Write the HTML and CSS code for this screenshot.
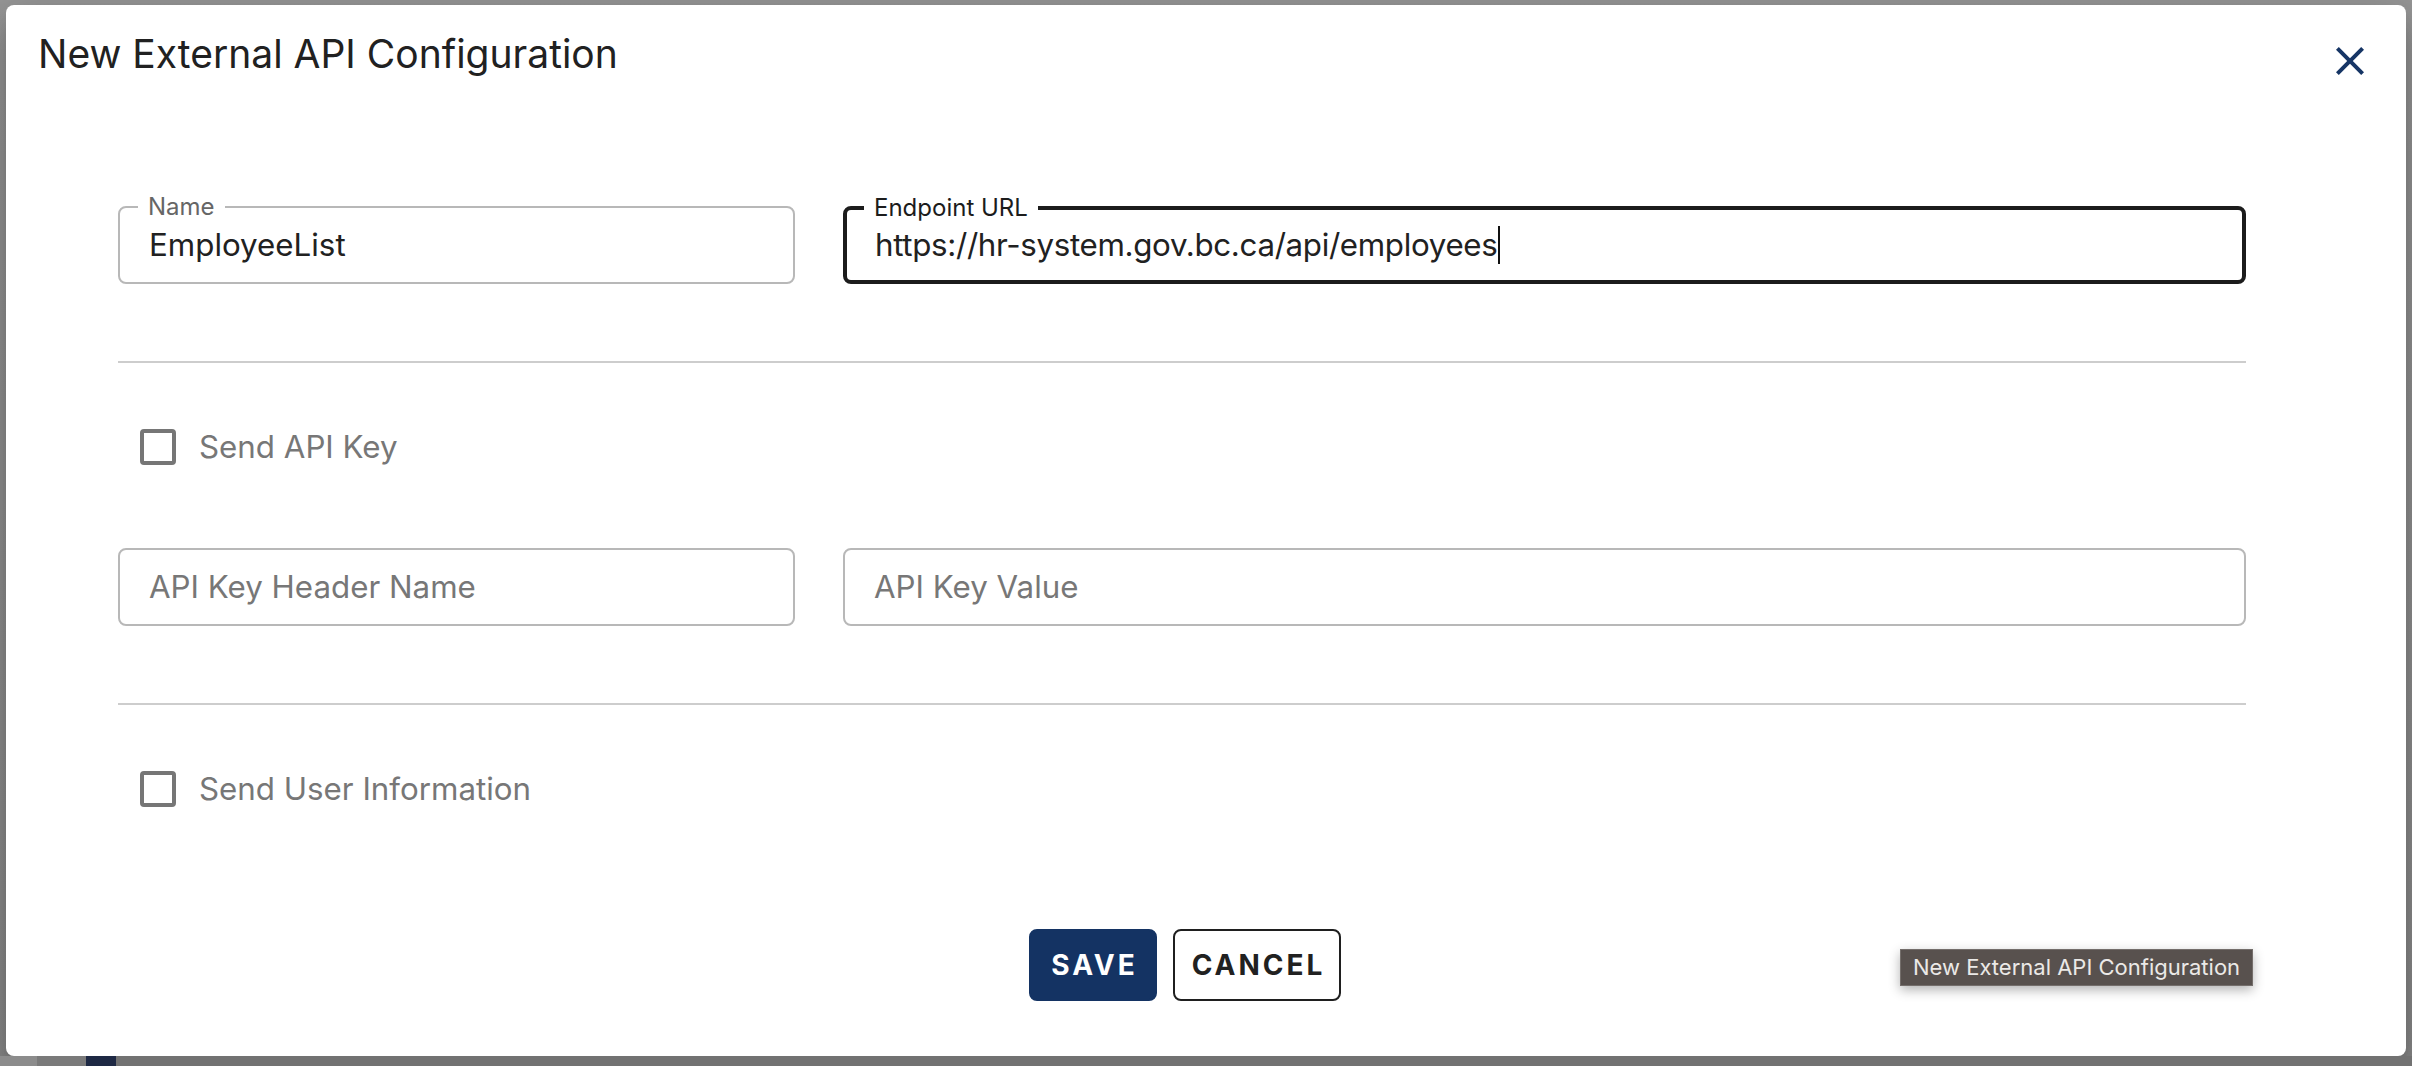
FILE: index.html
```html
<!DOCTYPE html>
<html lang="en">
<head>
<meta charset="utf-8">
<title>New External API Configuration</title>
<link rel="stylesheet" href="styles.css">
</head>
<body>
<div class="page">
  <div class="dialog">
    <div class="header">
      <h2 class="title">New External API Configuration</h2>
      <button class="close" aria-label="close">
        <svg viewBox="0 0 24 24" width="48" height="48"><path fill="currentColor" d="M19 6.41 17.59 5 12 10.59 6.41 5 5 6.41 10.59 12 5 17.59 6.41 19 12 13.41 17.59 19 19 17.59 13.41 12z"/></svg>
      </button>
    </div>
    <div class="content">
      <div class="row">
        <div class="field">
          <span class="label">Name</span>
          <span class="value">EmployeeList</span>
        </div>
        <div class="field focused">
          <span class="label">Endpoint URL</span>
          <span class="value url">https://hr-system.gov.bc.ca/api/employees<span class="caret"></span></span>
        </div>
      </div>
      <div class="divider"></div>
      <label class="check-row">
        <span class="box"></span>
        <span class="check-text">Send API Key</span>
      </label>
      <div class="row row2">
        <div class="field">
          <span class="placeholder">API Key Header Name</span>
        </div>
        <div class="field">
          <span class="placeholder">API Key Value</span>
        </div>
      </div>
      <div class="divider"></div>
      <label class="check-row">
        <span class="box"></span>
        <span class="check-text">Send User Information</span>
      </label>
      <div class="actions">
        <button class="btn btn-save">SAVE</button>
        <button class="btn btn-cancel">CANCEL</button>
      </div>
    </div>
  </div>
  <div class="under">
    <span class="u1"></span><span class="u2"></span><span class="u3"></span><span class="u4"></span>
  </div>
  <div class="tooltip">New External API Configuration</div>
</div>
</body>
</html>
```
FILE: styles.css
```css
html, body {
  margin: 0;
  padding: 0;
}
body {
  width: 2412px;
  height: 1066px;
  overflow: hidden;
  background: #8e8e8e;
  font-family: Inter, "Noto Sans", "Liberation Sans", sans-serif;
  color: #212121;
}
.page {
  position: relative;
  padding: 5px 6px 0 6px;
  height: 1066px;
  box-sizing: border-box;
  background: linear-gradient(#979797, #8a8a8a);
}
.dialog {
  width: 2400px;
  height: 1051px;
  box-sizing: border-box;
  background: #fff;
  border-radius: 8px;
  box-shadow: 0 11px 15px -7px rgba(0,0,0,.2), 0 24px 38px 3px rgba(0,0,0,.14), 0 9px 46px 8px rgba(0,0,0,.12);
  display: flex;
  flex-direction: column;
}
.header {
  height: 112px;
  display: flex;
  justify-content: space-between;
  align-items: flex-start;
  padding: 0 32px 0 32px;
}
.title {
  margin: 25px 0 0;
  font-size: 39px;
  line-height: 48px;
  font-weight: 400;
  color: #212121;
}
.close {
  margin-top: 32px;
  width: 48px;
  height: 48px;
  padding: 0;
  border: 0;
  background: none;
  color: #163565;
  display: flex;
}
.content {
  padding: 89px 160px 0 112px;
}
.row {
  display: grid;
  grid-template-columns: 677px 1403px;
  column-gap: 48px;
}
.row2 {
  margin-top: 59px;
}
.field {
  position: relative;
  height: 78px;
  box-sizing: border-box;
  border: 2px solid #b8b8b8;
  border-radius: 8px;
  display: flex;
  align-items: center;
  padding: 0 29px;
  font-size: 31.3px;
}
.field.focused {
  border: 4px solid #1c1c1c;
  padding: 0 28px;
}
.label {
  position: absolute;
  top: -15px;
  left: 18px;
  padding: 0 10px;
  background: #fff;
  font-size: 24px;
  line-height: 28px;
  color: #666;
}
.focused .label {
  top: -16px;
  left: 17px;
  color: #1c1c1c;
}
.value {
  color: #212121;
  display: flex;
  align-items: center;
}
.url {
  letter-spacing: -0.33px;
}
.caret {
  display: inline-block;
  width: 2px;
  height: 38px;
  background: #111;
  margin-left: 1px;
}
.placeholder {
  color: #777;
}
.divider {
  height: 2px;
  background: #cdcdcd;
  margin-top: 77px;
}
.check-row {
  height: 84px;
  margin-top: 42px;
  display: flex;
  align-items: center;
  gap: 23px;
  padding-left: 22px;
}
.box {
  width: 36px;
  height: 36px;
  box-sizing: border-box;
  border: 4px solid #767676;
  border-radius: 4px;
}
.check-text {
  font-size: 31.3px;
  color: #777;
}
.actions {
  margin-top: 98px;
  display: flex;
  justify-content: center;
  gap: 16px;
  padding-left: 6px;
}
.btn {
  height: 72px;
  box-sizing: border-box;
  border-radius: 8px;
  font-family: Inter, "Noto Sans", sans-serif;
  font-weight: 700;
  font-size: 28px;
  letter-spacing: 3px;
  padding: 0 0 0 3px;
  display: flex;
  align-items: center;
  justify-content: center;
}
.btn-save {
  width: 128px;
  background: #143363;
  border: 2px solid #143363;
  color: #fff;
}
.btn-cancel {
  width: 168px;
  background: #fff;
  border: 2px solid #1f1f1f;
  color: #212121;
}
.under {
  display: flex;
  height: 10px;
  margin: 0 -6px;
}
.u1 { width: 37px; background: #8c8c8c; }
.u2 { width: 49px; background: #7a7a7a; }
.u3 { width: 30px; background: #1e2944; }
.u4 { flex: 1; background: #727272; }
.tooltip {
  position: absolute;
  left: 1900px;
  top: 949px;
  height: 37px;
  box-sizing: border-box;
  padding: 0 12px;
  border: 1px solid #746e6b;
  background: #58514e;
  color: #ebe9e7;
  font-size: 22px;
  line-height: 35px;
  white-space: nowrap;
  box-shadow: 0 4px 12px rgba(0,0,0,.3);
}
```
